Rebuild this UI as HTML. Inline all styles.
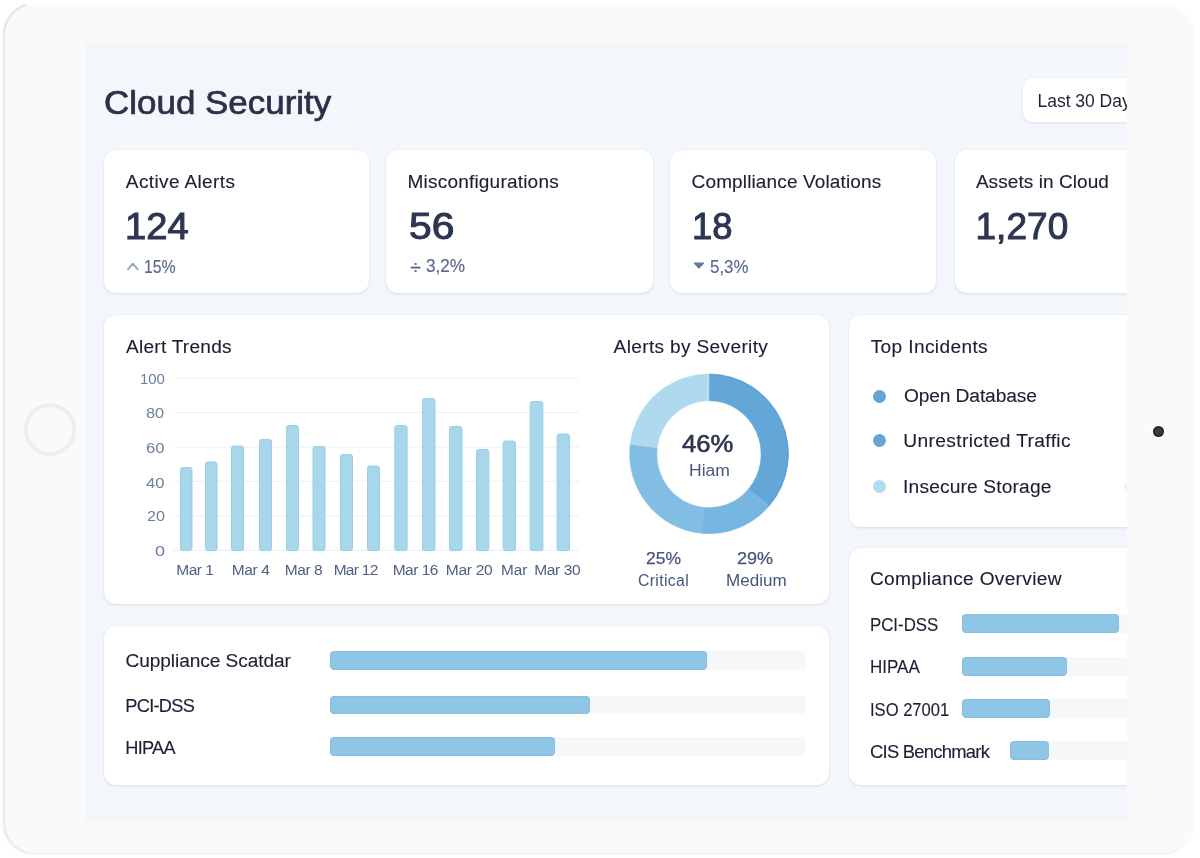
<!DOCTYPE html>
<html lang="en"><head><meta charset="utf-8"><title>Cloud Security</title>
<style>
html,body{margin:0;padding:0}
body{width:1200px;height:858px;position:relative;overflow:hidden;background:#fff;font-family:"Liberation Sans",sans-serif;-webkit-font-smoothing:antialiased}
*{box-sizing:border-box}
.tablet{position:absolute;left:4.5px;top:4.5px;width:1189.5px;height:848.2px;border-radius:30px;background:#fafafa;box-shadow:-1.2px 1px 2px rgba(0,0,0,.09),0 0 1.5px rgba(0,0,0,.04)}
.home{position:absolute;left:23.8px;top:403.4px;width:52.6px;height:52.6px;border-radius:50%;border:4px solid #eeeeee;background:#fafafa}
.cam{position:absolute;left:1153.4px;top:425.5px;width:11px;height:11px;border-radius:50%;background:radial-gradient(circle,#3a3a3a 0 42%,#141414 72%);box-shadow:0 0 0 1.6px rgba(255,255,255,.85)}
.screen{position:absolute;left:86px;top:41.6px;width:1041px;height:780.2px;background:#f3f6fa;overflow:hidden}
.abs{position:absolute;left:-86px;top:-41.6px;width:1200px;height:858px;will-change:transform}
.card{position:absolute;background:#fff;border-radius:12px;box-shadow:0 1px 2.5px rgba(60,80,110,.13),0 0 1px rgba(60,80,110,.10)}
.t{position:absolute;white-space:nowrap;margin:0;font-weight:400;transform-origin:0 50%}
.t.r{transform-origin:100% 50%}
.track{position:absolute;background:#f5f7f9;border-radius:5px}
.fill{position:absolute;background:#8fc5e5;border-radius:4.5px;box-shadow:inset 0 0 0 1px #86bfe2}
.dot{position:absolute;width:13px;height:13px;border-radius:50%}
svg{position:absolute;left:0;top:0;overflow:visible}
ul{list-style:none;margin:0;padding:0}
</style></head><body>
<div class="tablet"></div>
<svg width="60" height="60" style="filter:blur(.6px)"><path d="M4.2 31A30.8 30.8 0 0 1 25.5 5" fill="none" stroke="#e8e8e8" stroke-width="2.4" stroke-linecap="round"/></svg>
<div class="home"></div>
<div class="cam"></div>
<main class="screen"><div class="abs">
<header><h1 class="t" style="left:103.68px;top:85.70px;font-size:33px;line-height:33px;color:#2b3149;transform:scaleX(1.0591);-webkit-text-stroke:0.7px #2b3149;">Cloud Security</h1>
<button class="card" style="left:1023px;top:77.8px;width:140px;height:44.5px;border:0;border-radius:8.5px;padding:0"></button><span class="t" style="left:1037.50px;top:92.79px;font-size:17.5px;line-height:17.5px;color:#1e2233;letter-spacing:-0.023px;">Last 30 Day</span></header>
<section>
<article><div class="card" style="left:104px;top:150px;width:264.5px;height:142.5px"></div><h3 class="t" style="left:125.84px;top:172.21px;font-size:19px;line-height:19px;color:#1b1f31;letter-spacing:0.376px;-webkit-text-stroke:0.12px #1b1f31;">Active Alerts</h3><strong class="t" style="left:124.57px;top:208.30px;font-size:37px;line-height:37px;color:#2d3550;transform:scaleX(1.0300);-webkit-text-stroke:1.0px #2d3550;">124</strong><svg width="1200" height="858"><path d="M127.9 269.4L132.8 263.6L137.7 269.4" fill="none" stroke="#8fa5bc" stroke-width="1.7" stroke-linecap="round" stroke-linejoin="round"/></svg><span class="t" style="left:144.01px;top:257.52px;font-size:18.3px;line-height:18.3px;color:#566a90;transform:scaleX(0.8625);-webkit-text-stroke:0.15px #566a90;">15%</span></article>
<article><div class="card" style="left:386px;top:150px;width:266.5px;height:142.5px"></div><h3 class="t" style="left:407.52px;top:172.22px;font-size:19px;line-height:19px;color:#1b1f31;letter-spacing:0.206px;-webkit-text-stroke:0.12px #1b1f31;">Misconfigurations</h3><strong class="t" style="left:409.15px;top:207.86px;font-size:37px;line-height:37px;color:#2d3550;transform:scaleX(1.1041);-webkit-text-stroke:1.0px #2d3550;">56</strong><span class="t sym" style="left:410.2px;top:258.3px;font-size:19.5px;line-height:19.5px;color:#4d6188;-webkit-text-stroke:0.15px #4d6188">÷</span><span class="t" style="left:426.12px;top:257.23px;font-size:18.3px;line-height:18.3px;color:#566a90;transform:scaleX(0.9389);-webkit-text-stroke:0.15px #566a90;">3,2%</span></article>
<article><div class="card" style="left:670px;top:150px;width:266px;height:142.5px"></div><h3 class="t" style="left:691.59px;top:172.03px;font-size:19px;line-height:19px;color:#1b1f31;letter-spacing:0.135px;-webkit-text-stroke:0.12px #1b1f31;">Complliance Volations</h3><strong class="t" style="left:691.51px;top:208.05px;font-size:37px;line-height:37px;color:#2d3550;transform:scaleX(0.9826);-webkit-text-stroke:1.0px #2d3550;">18</strong><svg width="1200" height="858"><path d="M694.3 263.1H703.5L698.9 268Z" fill="#64789b" stroke="#64789b" stroke-width="1.1" stroke-linejoin="round"/></svg><span class="t" style="left:710.35px;top:257.60px;font-size:18.3px;line-height:18.3px;color:#566a90;transform:scaleX(0.9221);-webkit-text-stroke:0.15px #566a90;">5,3%</span></article>
<article><div class="card" style="left:954.6px;top:150px;width:220px;height:142.5px"></div><h3 class="t" style="left:975.89px;top:172.01px;font-size:19px;line-height:19px;color:#1b1f31;letter-spacing:0.071px;-webkit-text-stroke:0.12px #1b1f31;">Assets in Cloud</h3><strong class="t" style="left:975.43px;top:208.13px;font-size:37px;line-height:37px;color:#2d3550;letter-spacing:0.084px;-webkit-text-stroke:1.0px #2d3550;">1,270</strong></article>
</section>
<section>
<article><div class="card" style="left:104px;top:315px;width:725px;height:289px"></div>
<div><h2 class="t" style="left:126.00px;top:336.78px;font-size:19.1px;line-height:19.1px;color:#1b1f31;letter-spacing:0.241px;-webkit-text-stroke:0.12px #1b1f31;">Alert Trends</h2><svg width="1200" height="858"><line x1="174" x2="579" y1="378.4" y2="378.4" stroke="#eaf0f6" stroke-width="1"/><line x1="174" x2="579" y1="412.5" y2="412.5" stroke="#eaf0f6" stroke-width="1"/><line x1="174" x2="579" y1="447.1" y2="447.1" stroke="#eaf0f6" stroke-width="1"/><line x1="174" x2="579" y1="481.3" y2="481.3" stroke="#eaf0f6" stroke-width="1"/><line x1="174" x2="579" y1="515.8" y2="515.8" stroke="#eaf0f6" stroke-width="1"/><line x1="172.6" x2="579" y1="550.4" y2="550.4" stroke="#eaf0f6" stroke-width="1"/><rect x="180.5" y="467.5" width="11.5" height="83.1" rx="2.2" fill="#a8d6eb" stroke="#9ccee8" stroke-width="1"/><rect x="205.5" y="462.0" width="11.5" height="88.6" rx="2.2" fill="#a8d6eb" stroke="#9ccee8" stroke-width="1"/><rect x="231.5" y="446.0" width="12" height="104.6" rx="2.2" fill="#a8d6eb" stroke="#9ccee8" stroke-width="1"/><rect x="259.5" y="439.5" width="12" height="111.1" rx="2.2" fill="#a8d6eb" stroke="#9ccee8" stroke-width="1"/><rect x="286.5" y="425.5" width="12" height="125.1" rx="2.2" fill="#a8d6eb" stroke="#9ccee8" stroke-width="1"/><rect x="313.0" y="446.5" width="12.0" height="104.1" rx="2.2" fill="#a8d6eb" stroke="#9ccee8" stroke-width="1"/><rect x="340.5" y="454.5" width="12" height="96.1" rx="2.2" fill="#a8d6eb" stroke="#9ccee8" stroke-width="1"/><rect x="367.5" y="466.0" width="12" height="84.6" rx="2.2" fill="#a8d6eb" stroke="#9ccee8" stroke-width="1"/><rect x="394.8" y="425.5" width="12.300000000000011" height="125.1" rx="2.2" fill="#a8d6eb" stroke="#9ccee8" stroke-width="1"/><rect x="422.5" y="398.5" width="12.5" height="152.1" rx="2.2" fill="#a8d6eb" stroke="#9ccee8" stroke-width="1"/><rect x="449.5" y="426.5" width="12.5" height="124.1" rx="2.2" fill="#a8d6eb" stroke="#9ccee8" stroke-width="1"/><rect x="476.5" y="449.5" width="12.300000000000011" height="101.1" rx="2.2" fill="#a8d6eb" stroke="#9ccee8" stroke-width="1"/><rect x="503.1" y="441.0" width="12.399999999999977" height="109.6" rx="2.2" fill="#a8d6eb" stroke="#9ccee8" stroke-width="1"/><rect x="530.2" y="401.5" width="12.699999999999932" height="149.1" rx="2.2" fill="#a8d6eb" stroke="#9ccee8" stroke-width="1"/><rect x="557.1" y="434.0" width="12.399999999999977" height="116.6" rx="2.2" fill="#a8d6eb" stroke="#9ccee8" stroke-width="1"/></svg>
<span class="t" style="left:139.82px;top:370.86px;font-size:15.4px;line-height:15.4px;color:#6d7e9d;transform:scaleX(0.9705);">100</span><span class="t" style="left:145.99px;top:405.29px;font-size:15.4px;line-height:15.4px;color:#6d7e9d;transform:scaleX(1.0630);">80</span><span class="t" style="left:146.29px;top:440.41px;font-size:15.4px;line-height:15.4px;color:#6d7e9d;transform:scaleX(1.0791);">60</span><span class="t" style="left:145.58px;top:474.74px;font-size:15.4px;line-height:15.4px;color:#6d7e9d;transform:scaleX(1.0766);">40</span><span class="t" style="left:146.79px;top:508.35px;font-size:15.4px;line-height:15.4px;color:#6d7e9d;transform:scaleX(1.0513);">20</span><span class="t" style="left:154.70px;top:542.72px;font-size:15.4px;line-height:15.4px;color:#6d7e9d;transform:scaleX(1.1653);">0</span>
<span class="t" style="left:176.25px;top:561.66px;font-size:15.5px;line-height:15.5px;color:#4f5f82;letter-spacing:-0.498px;">Mar 1</span><span class="t" style="left:231.77px;top:562.02px;font-size:15.5px;line-height:15.5px;color:#4f5f82;letter-spacing:-0.368px;">Mar 4</span><span class="t" style="left:284.77px;top:562.36px;font-size:15.5px;line-height:15.5px;color:#4f5f82;letter-spacing:-0.437px;">Mar 8</span><span class="t" style="left:333.64px;top:562.38px;font-size:15.5px;line-height:15.5px;color:#4f5f82;letter-spacing:-0.723px;">Mar 12</span><span class="t" style="left:392.68px;top:562.01px;font-size:15.5px;line-height:15.5px;color:#4f5f82;letter-spacing:-0.492px;">Mar 16</span><span class="t" style="left:445.76px;top:561.56px;font-size:15.5px;line-height:15.5px;color:#4f5f82;letter-spacing:-0.267px;">Mar 20</span><span class="t" style="left:500.83px;top:561.54px;font-size:15.5px;line-height:15.5px;color:#4f5f82;transform:scaleX(0.9893);">Mar</span><span class="t" style="left:534.13px;top:561.96px;font-size:15.5px;line-height:15.5px;color:#4f5f82;letter-spacing:-0.335px;">Mar 30</span></div>
<div><h2 class="t" style="left:613.60px;top:336.95px;font-size:19.1px;line-height:19.1px;color:#1b1f31;letter-spacing:0.337px;-webkit-text-stroke:0.12px #1b1f31;">Alerts by Severity</h2><svg width="1200" height="858"><path d="M709.05 373.95A79.4 79.85 0 0 1 769.16 505.98L748.39 489.16A52.1 53.5 0 0 0 708.95 400.70Z" fill="#63a7d8" stroke="#63a7d8" stroke-width="0.5"/><path d="M769.16 505.98A79.4 79.85 0 0 1 701.30 533.27L703.87 507.44A52.1 53.5 0 0 0 748.39 489.16Z" fill="#77b6e0" stroke="#77b6e0" stroke-width="0.5"/><path d="M701.30 533.27A79.4 79.85 0 0 1 630.21 444.35L657.22 447.87A52.1 53.5 0 0 0 703.87 507.44Z" fill="#82bde4" stroke="#82bde4" stroke-width="0.5"/><path d="M630.21 444.35A79.4 79.85 0 0 1 709.05 373.95L708.95 400.70A52.1 53.5 0 0 0 657.22 447.87Z" fill="#aed9ee" stroke="#aed9ee" stroke-width="0.5"/><path d="M709.74 374.45A78.9 79.35 0 0 1 769.31 505.15" fill="none" stroke="#529ad2" stroke-width="1" opacity=".8"/><line x1="707.9" y1="374.25" x2="707.9" y2="400.50" stroke="#cfe8f5" stroke-width="0.9"/></svg>
<strong class="t" style="left:682.20px;top:431.59px;font-size:24.3px;line-height:24.3px;color:#2d3550;transform:scaleX(1.0568);-webkit-text-stroke:0.6px #2d3550;">46%</strong><span class="t" style="left:688.78px;top:463.35px;font-size:15.8px;line-height:15.8px;color:#4a5878;transform:scaleX(1.1115);">Hiam</span><span class="t" style="left:645.71px;top:550.14px;font-size:17px;line-height:17px;color:#46557a;transform:scaleX(1.0285);-webkit-text-stroke:0.25px #46557a;">25%</span><span class="t" style="left:637.96px;top:573.37px;font-size:15.8px;line-height:15.8px;color:#46557a;letter-spacing:0.365px;">Critical</span><span class="t" style="left:736.86px;top:550.14px;font-size:17px;line-height:17px;color:#46557a;transform:scaleX(1.0567);-webkit-text-stroke:0.25px #46557a;">29%</span><span class="t" style="left:726.42px;top:573.43px;font-size:15.8px;line-height:15.8px;color:#46557a;transform:scaleX(1.0780);">Medium</span></div></article>
</section>
<section>
<article><div class="card" style="left:849px;top:315px;width:330px;height:212px"></div>
<h2 class="t" style="left:870.70px;top:337.35px;font-size:19.1px;line-height:19.1px;color:#1b1f31;letter-spacing:0.368px;-webkit-text-stroke:0.12px #1b1f31;">Top Incidents</h2><ul><li><i class="dot" style="left:872.6px;top:389.5px;background:#62a5d6"></i><span class="t" style="left:903.88px;top:386.23px;font-size:19.2px;line-height:19.2px;color:#1b1f31;letter-spacing:-0.113px;-webkit-text-stroke:0.12px #1b1f31;">Open Database</span></li><li><i class="dot" style="left:872.6px;top:434.3px;background:#62a5d6"></i><span class="t" style="left:903.37px;top:431.38px;font-size:19.2px;line-height:19.2px;color:#1b1f31;letter-spacing:0.341px;-webkit-text-stroke:0.12px #1b1f31;">Unrestricted Traffic</span></li><li><i class="dot" style="left:872.6px;top:479.9px;background:#b3dbee"></i><span class="t" style="left:903.11px;top:476.73px;font-size:19.2px;line-height:19.2px;color:#1b1f31;letter-spacing:0.145px;-webkit-text-stroke:0.12px #1b1f31;">Insecure Storage</span></li></ul><i class="dot" style="left:1123.9px;top:480.2px;width:15px;height:15px;background:#f0f4f5"></i></article>
</section>
<section>
<article><div class="card" style="left:104px;top:626px;width:725.3px;height:158.7px"></div>
<div><span class="t" style="left:125.48px;top:651.48px;font-size:19.1px;line-height:19.1px;color:#1b1f31;letter-spacing:-0.067px;-webkit-text-stroke:0.12px #1b1f31;">Cuppliance Scatdar</span><div class="track" style="left:330px;top:651.2px;width:476px;height:18.6px"></div><div class="fill" style="left:330px;top:651.2px;width:377.3px;height:18.6px"></div></div>
<div><span class="t" style="left:125.29px;top:696.81px;font-size:18.2px;line-height:18.2px;color:#1b1f31;letter-spacing:-0.710px;-webkit-text-stroke:0.12px #1b1f31;">PCI-DSS</span><div class="track" style="left:330px;top:695.6px;width:476px;height:18.4px"></div><div class="fill" style="left:330px;top:695.6px;width:260.0px;height:18.4px"></div></div>
<div><span class="t" style="left:125.36px;top:738.55px;font-size:18.2px;line-height:18.2px;color:#1b1f31;letter-spacing:-0.741px;-webkit-text-stroke:0.12px #1b1f31;">HIPAA</span><div class="track" style="left:330px;top:737px;width:476px;height:18.8px"></div><div class="fill" style="left:330px;top:737px;width:224.8px;height:18.8px"></div></div>
</article></section>
<section>
<article><div class="card" style="left:848.7px;top:548px;width:330px;height:236.7px"></div>
<h2 class="t" style="left:869.99px;top:569.19px;font-size:19.1px;line-height:19.1px;color:#1b1f31;letter-spacing:0.321px;-webkit-text-stroke:0.12px #1b1f31;">Compliance Overview</h2><div><span class="t" style="left:870.14px;top:615.98px;font-size:18.4px;line-height:18.4px;color:#1b1f31;transform:scaleX(0.9148);-webkit-text-stroke:0.12px #1b1f31;">PCI-DSS</span><div class="track" style="left:962px;top:614.4px;width:200px;height:18.6px"></div><div class="fill" style="left:962px;top:614.4px;width:157.2px;height:18.6px"></div></div>
<div><span class="t" style="left:869.89px;top:658.44px;font-size:18.4px;line-height:18.4px;color:#1b1f31;transform:scaleX(0.9241);-webkit-text-stroke:0.12px #1b1f31;">HIPAA</span><div class="track" style="left:962px;top:657px;width:200px;height:18.6px"></div><div class="fill" style="left:962px;top:657px;width:105.0px;height:18.6px"></div></div>
<div><span class="t" style="left:869.89px;top:701.12px;font-size:18.4px;line-height:18.4px;color:#1b1f31;transform:scaleX(0.9012);-webkit-text-stroke:0.12px #1b1f31;">ISO 27001</span><div class="track" style="left:962px;top:699.4px;width:200px;height:18.6px"></div><div class="fill" style="left:962px;top:699.4px;width:88.0px;height:18.6px"></div></div>
<div><span class="t" style="left:870.09px;top:743.12px;font-size:18.4px;line-height:18.4px;color:#1b1f31;letter-spacing:-0.749px;-webkit-text-stroke:0.12px #1b1f31;">CIS Benchmark</span><div class="track" style="left:1010.2px;top:741.4px;width:200px;height:18.8px"></div><div class="fill" style="left:1010.2px;top:741.4px;width:39.3px;height:18.8px"></div></div>
</article></section>
</div></main>
</body></html>
